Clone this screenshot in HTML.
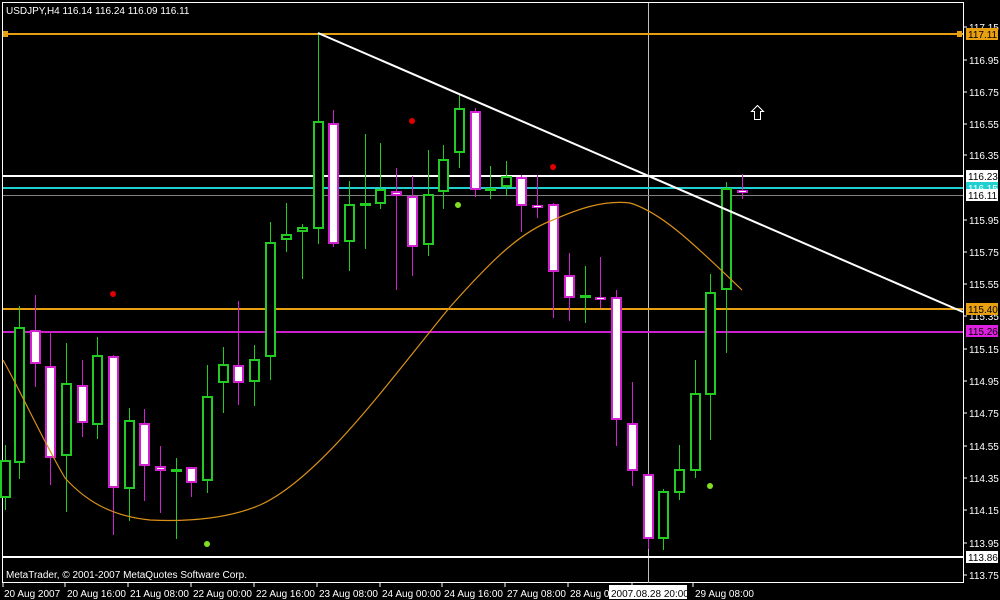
<!DOCTYPE html>
<html><head><meta charset="utf-8"><style>
html,body{margin:0;padding:0;background:#000;width:1000px;height:600px;overflow:hidden}
svg{display:block}
text{font-family:"Liberation Sans",sans-serif;font-size:10px;fill:#fff}
</style></head><body>
<svg id="s" width="1000" height="600" viewBox="0 0 1000 600" xmlns="http://www.w3.org/2000/svg" shape-rendering="crispEdges">
<rect x="0" y="0" width="1000" height="600" fill="#000"/>
<rect x="2.5" y="2.5" width="961" height="580" fill="none" stroke="#fff" stroke-width="1"/>
<line x1="648.5" y1="3" x2="648.5" y2="583" stroke="#c0c0c0" stroke-width="1"/>
<line x1="3" y1="34" x2="963" y2="34" stroke="#e8a010" stroke-width="2"/>
<rect x="3" y="31" width="5" height="6" fill="#e8a010"/>
<rect x="957" y="31" width="5" height="6" fill="#e8a010"/>
<line x1="3" y1="176" x2="963" y2="176" stroke="#fff" stroke-width="2"/>
<line x1="3" y1="188" x2="963" y2="188" stroke="#20d0d0" stroke-width="2"/>
<line x1="3" y1="195.5" x2="963" y2="195.5" stroke="#808080" stroke-width="1"/>
<line x1="3" y1="309" x2="963" y2="309" stroke="#e8a010" stroke-width="2"/>
<line x1="3" y1="332" x2="963" y2="332" stroke="#cc20cc" stroke-width="2"/>
<line x1="3" y1="557" x2="963" y2="557" stroke="#fff" stroke-width="2"/>
<g id="c"></g>
<path d="M3,360 C20,390 40,435 65,478 C85,500 110,516 150,520 C190,522 230,518 260,505 C320,478 390,380 450,307 C490,262 520,232 553,220 C580,208 605,200 630,203 C660,212 690,240 742,290" fill="none" stroke="#d9901a" stroke-width="1.2" shape-rendering="auto"/>
<line x1="318" y1="33" x2="963" y2="312" stroke="#fff" stroke-width="2" shape-rendering="auto"/>
<g shape-rendering="auto">
<circle cx="113" cy="294" r="3" fill="#e00000"/>
<circle cx="412" cy="121" r="3" fill="#e00000"/>
<circle cx="553" cy="167" r="3" fill="#e00000"/>
<circle cx="207" cy="544" r="3" fill="#80e020"/>
<circle cx="458" cy="205" r="3" fill="#80e020"/>
<circle cx="710" cy="486" r="3" fill="#80e020"/>
</g>
<path d="M757.5,105.5 L763.5,111.5 L760.5,111.5 L760.5,119.5 L754.5,119.5 L754.5,111.5 L751.5,111.5 Z" fill="none" stroke="#fff" stroke-width="1"/>
<text x="6" y="14">USDJPY,H4  116.14 116.24 116.09 116.11</text>
<text x="6" y="578">MetaTrader, © 2001-2007 MetaQuotes Software Corp.</text>
<g id="ax"></g>
</svg>
<script>
var C=[[5,445,510,460,498,1],[19,306,479,327,463,1],[35,295,387,330,364,0],[50,333,485,366,458,0],[66,343,512,383,456,1],[82,360,437,385,423,0],[97,337,439,355,425,1],[113,355,535,356,488,0],[129,408,521,420,489,1],[144,409,501,423,466,0],[160,446,513,466,471,0],[176,458,539,469,472,1],[191,467,497,467,483,0],[207,365,493,396,481,1],[223,347,413,364,383,1],[238,301,405,365,383,0],[254,345,406,359,382,1],[270,222,380,242,357,1],[286,203,252,234,240,1],[302,224,279,227,232,1],[318,33,244,121,229,1],[333,110,247,123,244,0],[349,181,271,204,242,1],[365,134,249,203,204,1],[380,143,209,189,204,1],[396,168,290,191,196,0],[412,176,276,196,247,0],[428,150,256,194,245,1],[443,145,209,159,192,1],[459,95,168,108,153,1],[475,108,197,111,190,0],[490,166,199,188,189,1],[506,161,196,176,187,1],[521,175,232,177,206,0],[537,175,218,205,207,0],[553,203,318,204,272,0],[569,253,321,275,298,0],[585,266,323,295,297,1],[600,257,308,297,298,0],[616,290,446,297,420,0],[632,382,486,423,471,0],[648,474,549,474,539,0],[663,489,550,491,539,1],[679,445,500,469,493,1],[695,360,478,393,471,1],[710,274,440,292,395,1],[726,182,353,188,290,1],[742,174,199,190,193,0]];
var g=document.getElementById('c'),h='';
C.forEach(function(c){var x=c[0],col=c[5]?'#22cc22':'#d020d0',fill=c[5]?'#000':'#fff';
h+='<rect x="'+x+'" y="'+c[1]+'" width="1" height="'+(c[2]-c[1])+'" fill="'+col+'"/>';
var hh=Math.max(c[4]-c[3],3);
h+='<rect x="'+(x-5)+'" y="'+c[3]+'" width="11" height="'+hh+'" fill="'+col+'"/>';
if(hh>4)h+='<rect x="'+(x-3)+'" y="'+(c[3]+2)+'" width="7" height="'+(hh-4)+'" fill="'+fill+'"/>';
else if(!c[5])h+='<rect x="'+(x-3)+'" y="'+(c[3]+1)+'" width="7" height="'+(hh-2)+'" fill="#fff"/>';});
g.innerHTML=h;
var a=document.getElementById('ax'),s='';
var L=[['117.15',27],['116.95',60],['116.75',92],['116.55',124],['116.35',155],['115.95',220],['115.75',252],['115.55',284],['115.35',316],['115.15',349],['114.95',381],['114.75',413],['114.55',446],['114.35',478],['114.15',510],['113.95',543],['113.75',575]];
L.forEach(function(l){s+='<line x1="964" y1="'+l[1]+'" x2="967" y2="'+l[1]+'" stroke="#fff"/><text x="969" y="'+(l[1]+4)+'">'+l[0]+'</text>';});
var B=[['117.11',34,'#e8a010','#000'],['116.23',176,'#fff','#000'],['116.15',188,'#20d0d0','#fff'],['116.11',195,'#fff','#000'],['115.40',309,'#e8a010','#000'],['115.26',331,'#e020e0','#000'],['113.86',557,'#fff','#000']];
B.forEach(function(b){s+='<rect x="966" y="'+(b[1]-6)+'" width="32" height="12" fill="'+b[2]+'"/><text x="968" y="'+(b[1]+4)+'" style="fill:'+b[3]+'">'+b[0]+'</text>';});
var D=[['20 Aug 2007',3],['20 Aug 16:00',66],['21 Aug 08:00',129],['22 Aug 00:00',192],['22 Aug 16:00',255],['23 Aug 08:00',318],['24 Aug 00:00',381],['24 Aug 16:00',443],['27 Aug 08:00',506],['28 Aug 00',569],['29 Aug 08:00',694]];
D.forEach(function(d){var tx=d[0]=='20 Aug 2007'?3:d[1]-1;s+='<line x1="'+tx+'" y1="583" x2="'+tx+'" y2="587" stroke="#fff"/><text x="'+(d[1]+1)+'" y="597">'+d[0]+'</text>';});
s+='<line x1="632" y1="583" x2="632" y2="587" stroke="#fff"/>';
s+='<rect x="609" y="585" width="78" height="14" fill="#fff"/><text x="611" y="597" style="fill:#000">2007.08.28 20:00</text>';
a.innerHTML=s;
</script>
</body></html>
